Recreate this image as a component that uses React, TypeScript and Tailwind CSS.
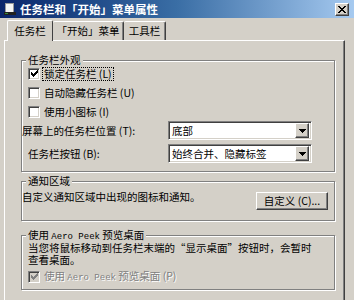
import type { ReactNode } from 'react'

const SUNKEN =
  'border border-t-[#808080] border-l-[#808080] border-r-white border-b-white shadow-[inset_1px_1px_0_#404040,inset_-1px_-1px_0_#d4d0c8]'
const RAISED =
  'border border-t-white border-l-white border-r-[#404040] border-b-[#404040] shadow-[inset_-1px_-1px_0_#808080]'

function CheckMark({ color }: { color: string }) {
  return (
    <svg width="7" height="7" viewBox="0 0 7 7" shapeRendering="crispEdges">
      <path
        fill={color}
        d="M6 0h1v3h-1zM5 1h1v3h-1zM4 2h1v3h-1zM3 3h1v3h-1zM2 4h1v3h-1zM1 3h1v3h-1zM0 2h1v3h-1z"
      />
    </svg>
  )
}

function Checkbox({ checked, disabled }: { checked?: boolean; disabled?: boolean }) {
  return (
    <span
      className={`flex h-[12px] w-[12px] shrink-0 items-center justify-center ${SUNKEN} ${
        disabled ? 'bg-[#d4d0c8]' : 'bg-white'
      }`}
    >
      {checked && <CheckMark color={disabled ? '#808080' : '#000'} />}
    </span>
  )
}

function CheckRow({
  label,
  checked,
  focused,
  disabled,
}: {
  label: ReactNode
  checked?: boolean
  focused?: boolean
  disabled?: boolean
}) {
  return (
    <div className="flex h-[19px] items-center gap-[3px]">
      <Checkbox checked={checked} disabled={disabled} />
      <span
        className={`px-[1px] leading-[12px] ${focused ? 'outline-1 outline-dotted outline-black' : ''} ${
          disabled ? 'text-[#808080] [text-shadow:1px_1px_0_#fff]' : ''
        }`}
      >
        {label}
      </span>
    </div>
  )
}

function DownArrow() {
  return (
    <svg width="7" height="4" viewBox="0 0 7 4" shapeRendering="crispEdges">
      <path d="M0 0h7v1h-7zM1 1h5v1h-5zM2 2h3v1h-3zM3 3h1v1h-1z" fill="#000" />
    </svg>
  )
}

function Select({ value }: { value: string }) {
  return (
    <div className={`flex h-[19px] w-[144px] items-center bg-white p-[2px] ${SUNKEN}`}>
      <span className="flex-1 pl-[1px] leading-[12px]">{value}</span>
      <span className={`flex h-[15px] w-[14px] items-center justify-center bg-[#d4d0c8] ${RAISED}`}>
        <DownArrow />
      </span>
    </div>
  )
}

function SelectRow({ label, value, indent }: { label: string; value: string; indent: string }) {
  return (
    <div className="flex items-center">
      <span className={`flex-1 leading-[12px] ${indent}`}>{label}</span>
      <Select value={value} />
    </div>
  )
}

function Group({ title, className, children }: { title: ReactNode; className: string; children: ReactNode }) {
  return (
    <div
      className={`relative border border-[#808080] shadow-[inset_1px_1px_0_#fff,1px_1px_0_#fff] ${className}`}
    >
      <span className="absolute left-[4px] top-[-7px] bg-[#d4d0c8] px-[2px] leading-[11px]">{title}</span>
      {children}
    </div>
  )
}

const Aero = () => <span className="font-['Liberation_Mono',monospace] text-[9px] leading-none">Aero Peek</span>

export default function App() {
  return (
    <div className="h-[300px] w-[354px] overflow-hidden bg-[#d4d0c8] font-['Noto_Sans_CJK_SC',sans-serif] text-[10.5px] text-black">
      {/* title bar */}
      <div className="flex h-[18px] items-center bg-gradient-to-r from-[#0a246a] via-[#3a6ea5] to-[#a6caf0] pl-[3px] pr-[5px]">
        <svg width="14" height="14" viewBox="0 0 14 14" shapeRendering="crispEdges">
          <rect x="2" y="1" width="8" height="11" fill="#f4f4f4" stroke="#9a9a9a" />
          <rect x="1" y="10" width="12" height="3" fill="#202020" />
          <rect x="2" y="11" width="3" height="1" fill="#3a8a3a" />
        </svg>
        <span className="ml-[3px] flex-1 text-[11.5px] font-bold leading-[14px] text-white">
          任务栏和「开始」菜单属性
        </span>
        <span className={`flex h-[13px] w-[14px] items-center justify-center bg-[#d4d0c8] ${RAISED}`}>
          <svg width="8" height="7" viewBox="0 0 8 7" shapeRendering="crispEdges">
            <path
              fill="#000"
              d="M0 0h2v1h-2zM6 0h2v1h-2zM1 1h2v1h-2zM5 1h2v1h-2zM2 2h4v1h-4zM3 3h2v1h-2zM2 4h4v1h-4zM1 5h2v1h-2zM5 5h2v1h-2zM0 6h2v1h-2zM6 6h2v1h-2z"
            />
          </svg>
        </span>
      </div>

      <div className="px-[4px] pr-[9px]">
        {/* tabs */}
        <div className="flex h-[22px] items-end pl-[3px]">
          <div className="relative z-10 -mb-px flex h-[21px] w-[46px] items-center justify-center rounded-t-[2px] border-l border-t border-r border-l-white border-t-white border-r-[#404040] bg-[#d4d0c8] leading-[12px]">
            任务栏
          </div>
          <div className="flex h-[19px] w-[71px] items-center justify-center rounded-t-[2px] border-t border-r border-t-white border-r-[#404040] leading-[12px] shadow-[inset_-1px_0_0_#808080]">
            「开始」菜单
          </div>
          <div className="flex h-[19px] w-[42px] items-center justify-center rounded-t-[2px] border-t border-r border-t-white border-r-[#404040] leading-[12px] shadow-[inset_-1px_0_0_#808080]">
            工具栏
          </div>
        </div>

        {/* panel */}
        <div className="h-[270px] border border-t-white border-l-white border-r-[#404040] border-b-[#404040] pl-[16px] pr-[9px] pt-[19px] shadow-[inset_-1px_-1px_0_#808080]">
          <Group title="任务栏外观" className="h-[112px] pt-[3px]">
            <div className="pl-[6px]">
              <CheckRow label="锁定任务栏 (L)" checked focused />
              <CheckRow label="自动隐藏任务栏 (U)" />
              <CheckRow label="使用小图标 (I)" />
            </div>
            <div className="flex flex-col gap-[4px] pr-[22px]">
              <SelectRow label="屏幕上的任务栏位置 (T):" value="底部" indent="pl-[0px]" />
              <SelectRow label="任务栏按钮 (B):" value="始终合并、隐藏标签" indent="pl-[6px]" />
            </div>
          </Group>

          <Group title="通知区域" className="mt-[9px] h-[40px] pt-[9px] pr-[6px]">
            <div className="flex items-start justify-between">
              <span className="pl-[0px] leading-[12px]">自定义通知区域中出现的图标和通知。</span>
              <button
                className={`mt-[1px] flex h-[18px] w-[72px] items-center justify-center bg-[#d4d0c8] leading-[12px] ${RAISED}`}
              >
                自定义 (C)...
              </button>
            </div>
          </Group>

          <Group
            title={
              <>
                使用 <Aero /> 预览桌面
              </>
            }
            className="mt-[14px] h-[55px] pl-[6px] pt-[6px]"
          >
            <p className="leading-[12px]">
              当您将鼠标移动到任务栏末端的“显示桌面”按钮时，会暂时
              <br />
              查看桌面。
            </p>
            <div className="mt-[1px]">
              <CheckRow
                label={
                  <>
                    使用 <Aero /> 预览桌面 (P)
                  </>
                }
                checked
                disabled
              />
            </div>
          </Group>
        </div>
      </div>
    </div>
  )
}
